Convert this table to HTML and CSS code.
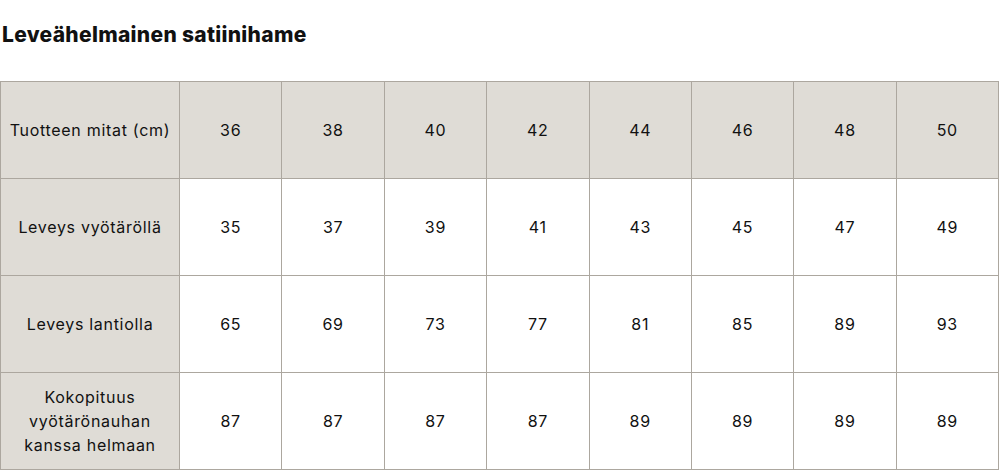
FILE: index.html
```html
<!DOCTYPE html>
<html lang="fi">
<head>
<meta charset="utf-8">
<link rel="stylesheet" href="styles.css">
</head>
<body>
<h1 class="title">Leveähelmainen satiinihame</h1>
<table class="sizes">
  <colgroup>
    <col class="col-label">
    <col span="8">
  </colgroup>
  <tr class="head">
    <th>Tuotteen mitat (cm)</th>
    <th>36</th><th>38</th><th>40</th><th>42</th><th>44</th><th>46</th><th>48</th><th>50</th>
  </tr>
  <tr>
    <th>Leveys vyötäröllä</th>
    <td>35</td><td>37</td><td>39</td><td>41</td><td>43</td><td>45</td><td>47</td><td>49</td>
  </tr>
  <tr>
    <th>Leveys lantiolla</th>
    <td>65</td><td>69</td><td>73</td><td>77</td><td>81</td><td>85</td><td>89</td><td>93</td>
  </tr>
  <tr>
    <th>Kokopituus vyötärönauhan kanssa helmaan</th>
    <td>87</td><td>87</td><td>87</td><td>87</td><td>89</td><td>89</td><td>89</td><td>89</td>
  </tr>
</table>
</body>
</html>
```
FILE: styles.css
```css
html, body {
  margin: 0;
  padding: 0;
  background: #ffffff;
}
body {
  font-family: Inter, "Liberation Sans", sans-serif;
  color: #111111;
}
.title {
  margin: 0;
  padding: 23px 0 0 2px;
  height: 81px;
  box-sizing: border-box;
  font-size: 21px;
  font-weight: 800;
  line-height: 24px;
  letter-spacing: 0.3px;
}
.sizes {
  width: 999px;
  border-collapse: collapse;
  table-layout: fixed;
  font-size: 16px;
  line-height: 24px;
  letter-spacing: 0.7px;
}
.col-label {
  width: 179px;
}
.sizes th,
.sizes td {
  border: 1px solid #aca79f;
  height: 97px;
  padding: 0 6px;
  text-align: center;
  vertical-align: middle;
  font-weight: 400;
  box-sizing: border-box;
}
.sizes th {
  background: #dfdcd6;
}
.sizes td {
  background: #ffffff;
}
.sizes .head th:first-child {
  padding: 0 2px;
}
```
